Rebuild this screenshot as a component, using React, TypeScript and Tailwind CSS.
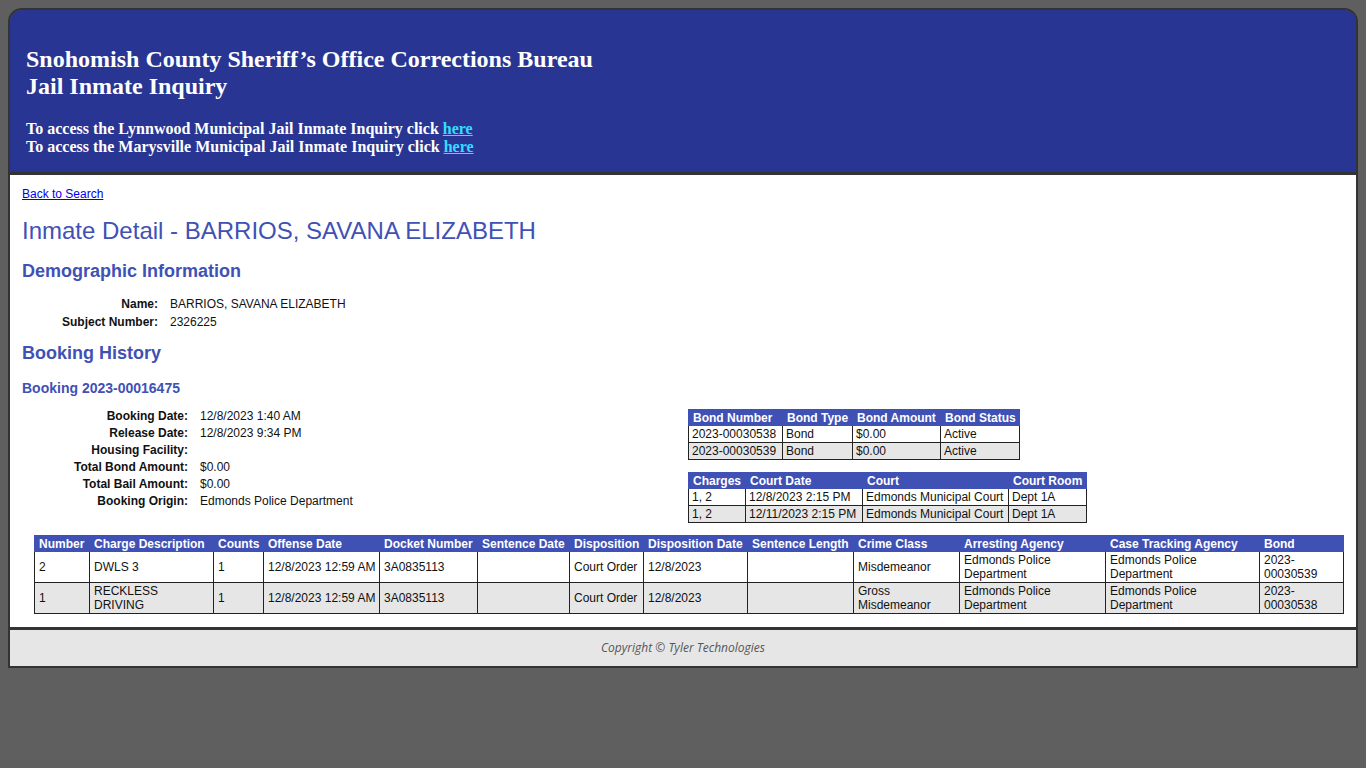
import React from "react";

const sans = { fontFamily: '"Liberation Sans", Arial, sans-serif' };

const bonds = [
  ["2023-00030538", "Bond", "$0.00", "Active"],
  ["2023-00030539", "Bond", "$0.00", "Active"],
];
const bondW = [94, 70, 88, 79];

const courts = [
  ["1, 2", "12/8/2023 2:15 PM", "Edmonds Municipal Court", "Dept 1A"],
  ["1, 2", "12/11/2023 2:15 PM", "Edmonds Municipal Court", "Dept 1A"],
];
const courtW = [57, 117, 146, 78];

const chargeHead = [
  "Number",
  "Charge Description",
  "Counts",
  "Offense Date",
  "Docket Number",
  "Sentence Date",
  "Disposition",
  "Disposition Date",
  "Sentence Length",
  "Crime Class",
  "Arresting Agency",
  "Case Tracking Agency",
  "Bond",
];
const chargeW = [55, 124, 50, 116, 98, 92, 74, 104, 106, 106, 146, 154, 84];
const noWrap = [true, false, true, true, true, true, true, true, true, false, false, false, false];
const charges = [
  ["2", "DWLS 3", "1", "12/8/2023 12:59 AM", "3A0835113", "", "Court Order", "12/8/2023", "", "Misdemeanor", "Edmonds Police Department", "Edmonds Police Department", "2023-00030539"],
  ["1", "RECKLESS DRIVING", "1", "12/8/2023 12:59 AM", "3A0835113", "", "Court Order", "12/8/2023", "", "Gross Misdemeanor", "Edmonds Police Department", "Edmonds Police Department", "2023-00030538"],
];

function SmallTable({ head, widths, rows }: { head: string[]; widths: number[]; rows: string[][] }) {
  return (
    <table className="border-collapse text-[12px] leading-[14px] table-fixed" style={{ width: widths.reduce((a, b) => a + b, 0) }}>
      <colgroup>
        {widths.map((w, i) => (
          <col key={i} style={{ width: w }} />
        ))}
      </colgroup>
      <thead>
        <tr className="bg-[#3f51b5] text-white">
          {head.map((h, i) => (
            <th key={i} className="text-left font-bold px-[4px] h-[16px] whitespace-nowrap border border-[#3f51b5]">
              {h}
            </th>
          ))}
        </tr>
      </thead>
      <tbody>
        {rows.map((r, ri) => (
          <tr key={ri} className={ri % 2 ? "bg-[#e6e6e6]" : "bg-white"}>
            {r.map((c, ci) => (
              <td key={ci} className="border border-[#222] px-[3px] h-[17px] whitespace-nowrap text-[#111]">
                {c}
              </td>
            ))}
          </tr>
        ))}
      </tbody>
    </table>
  );
}

export default function App() {
  return (
    <div className="min-h-[768px] bg-[#5f5f5f] pt-[8px] px-[8px]" style={sans}>
      <div className="border-2 border-[#333] rounded-t-[14px] overflow-hidden">
        <div
          className="bg-[#283593] text-white pt-[36px] pb-[16px] pl-[16px] border-b-[3px] border-[#333]"
          style={{ fontFamily: '"Liberation Serif", "Times New Roman", serif' }}
        >
          <h1 className="text-[24px] leading-[27px] font-bold">
            Snohomish County Sheriff’s Office Corrections Bureau
            <br />
            Jail Inmate Inquiry
          </h1>
          <div className="mt-[20px] text-[16px] leading-[18px] font-bold">
            <div>
              To access the Lynnwood Municipal Jail Inmate Inquiry click{" "}
              <a href="#" className="text-[#33ddff] underline">here</a>
            </div>
            <div>
              To access the Marysville Municipal Jail Inmate Inquiry click{" "}
              <a href="#" className="text-[#33ddff] underline">here</a>
            </div>
          </div>
        </div>

        <div className="bg-white px-[12px] pt-[12px] pb-[13px]">
          <a href="#" className="text-[12px] leading-[14px] text-[#0000ee] underline block w-fit">
            Back to Search
          </a>
          <h2 className="mt-[16px] text-[24px] leading-[28px] text-[#3f51b5]">
            Inmate Detail - BARRIOS, SAVANA ELIZABETH
          </h2>
          <h3 className="mt-[15px] text-[18px] leading-[22px] font-bold text-[#3f51b5]">Demographic Information</h3>
          <div className="mt-[13px] grid grid-cols-[136px_1fr] gap-x-[12px] text-[12px] leading-[18px] text-[#111]">
            <div className="text-right font-bold">Name:</div>
            <div>BARRIOS, SAVANA ELIZABETH</div>
            <div className="text-right font-bold">Subject Number:</div>
            <div>2326225</div>
          </div>
          <h3 className="mt-[11px] text-[18px] leading-[22px] font-bold text-[#3f51b5]">Booking History</h3>
          <h4 className="mt-[15px] text-[14px] leading-[18px] font-bold text-[#3f51b5]">Booking 2023-00016475</h4>

          <div className="mt-[11px] flex">
            <div className="w-[666px] grid grid-cols-[166px_1fr] gap-x-[12px] content-start text-[12px] leading-[17px] text-[#111]">
              <div className="text-right font-bold">Booking Date:</div>
              <div>12/8/2023 1:40 AM</div>
              <div className="text-right font-bold">Release Date:</div>
              <div>12/8/2023 9:34 PM</div>
              <div className="text-right font-bold">Housing Facility:</div>
              <div></div>
              <div className="text-right font-bold">Total Bond Amount:</div>
              <div>$0.00</div>
              <div className="text-right font-bold">Total Bail Amount:</div>
              <div>$0.00</div>
              <div className="text-right font-bold">Booking Origin:</div>
              <div>Edmonds Police Department</div>
            </div>
            <div className="pt-[1px] flex flex-col gap-[12px]">
              <SmallTable head={["Bond Number", "Bond Type", "Bond Amount", "Bond Status"]} widths={bondW} rows={bonds} />
              <SmallTable head={["Charges", "Court Date", "Court", "Court Room"]} widths={courtW} rows={courts} />
            </div>
          </div>

          <div className="mt-[12px] pl-[12px]">
            <table className="border-collapse table-fixed text-[12px] leading-[14px]" style={{ width: 1310 }}>
              <colgroup>
                {chargeW.map((w, i) => (
                  <col key={i} style={{ width: w }} />
                ))}
              </colgroup>
              <thead>
                <tr className="bg-[#3f51b5] text-white">
                  {chargeHead.map((h, i) => (
                    <th key={i} className="text-left font-bold px-[4px] h-[16px] whitespace-nowrap border border-[#3f51b5]">
                      {h}
                    </th>
                  ))}
                </tr>
              </thead>
              <tbody>
                {charges.map((r, ri) => (
                  <tr key={ri} className={ri % 2 ? "bg-[#e6e6e6]" : "bg-white"}>
                    {r.map((c, ci) => (
                      <td
                        key={ci}
                        className={`border border-[#222] px-[4px] h-[31px] align-middle text-[#111] ${noWrap[ci] ? "whitespace-nowrap" : ""}`}
                      >
                        {c}
                      </td>
                    ))}
                  </tr>
                ))}
              </tbody>
            </table>
          </div>
        </div>

        <div className="bg-[#e6e6e6] border-t-[3px] border-[#333] h-[39px] flex items-center justify-center">
          <span className="text-[12px] italic text-[#555]" style={{ fontFamily: '"Open Sans", sans-serif' }}>
            Copyright © Tyler Technologies
          </span>
        </div>
      </div>
    </div>
  );
}
